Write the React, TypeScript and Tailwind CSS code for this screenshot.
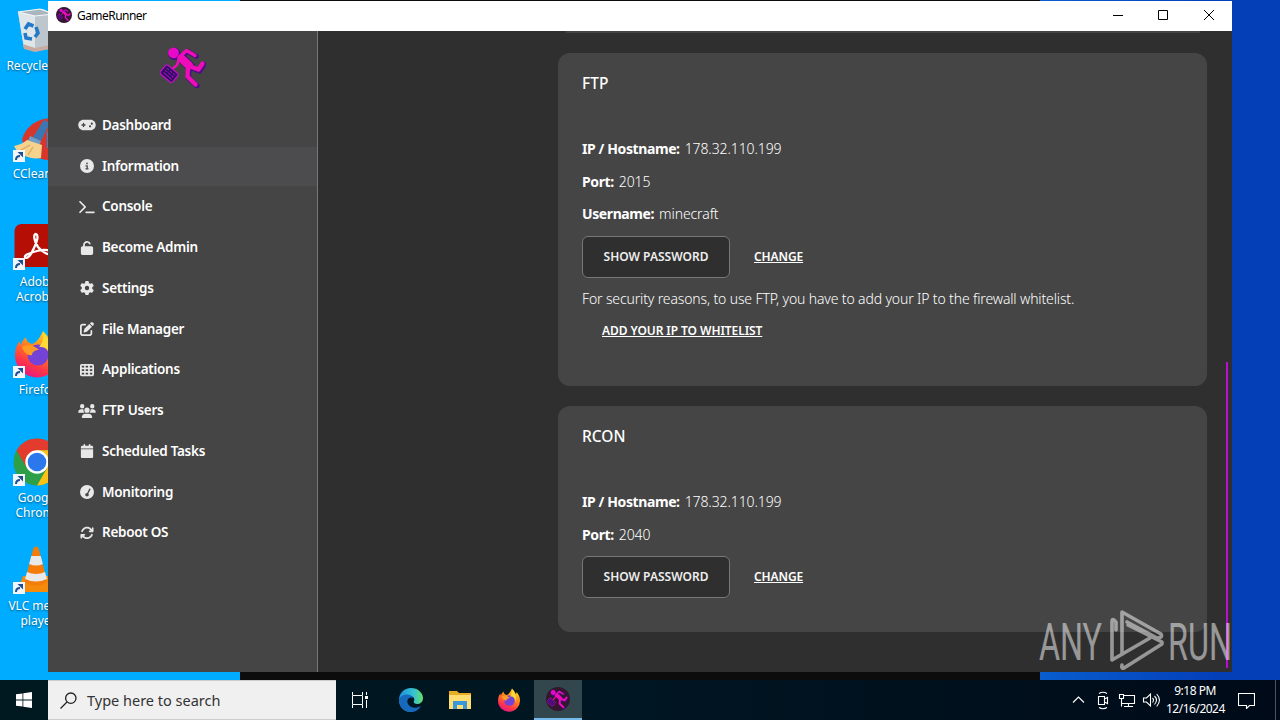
import type { ReactNode } from "react";
import type { IconType } from "react-icons";
import {
  FaArrowsRotate,
  FaCalendar,
  FaCircleInfo,
  FaGamepad,
  FaGaugeSimpleHigh,
  FaGear,
  FaPenToSquare,
  FaTableCells,
  FaTerminal,
  FaUnlock,
  FaUsers,
} from "react-icons/fa6";

type NavItem = { label: string; icon: IconType };

const navItems: NavItem[] = [
  { label: "Dashboard", icon: FaGamepad },
  { label: "Information", icon: FaCircleInfo },
  { label: "Console", icon: FaTerminal },
  { label: "Become Admin", icon: FaUnlock },
  { label: "Settings", icon: FaGear },
  { label: "File Manager", icon: FaPenToSquare },
  { label: "Applications", icon: FaTableCells },
  { label: "FTP Users", icon: FaUsers },
  { label: "Scheduled Tasks", icon: FaCalendar },
  { label: "Monitoring", icon: FaGaugeSimpleHigh },
  { label: "Reboot OS", icon: FaArrowsRotate },
];

function Runner({ className }: { className?: string }) {
  return (
    <svg viewBox="0 0 46 42" className={className} fill="none" strokeLinecap="round" strokeLinejoin="round">
      <g stroke="#4b0f86" transform="translate(0.9 0.9)">
        <circle cx="13.5" cy="7" r="5.8" fill="#4b0f86" />
        <path d="M19 11.5 26.5 4.5 35.5 9.5" strokeWidth="5" />
        <path d="M22 12.5 29.5 20" strokeWidth="9.5" />
        <path d="M29 20 38.5 24 43 17.5M28 21 27.5 31 36 39" strokeWidth="5.4" />
      </g>
      <g stroke="#f00cb8">
        <circle cx="13.5" cy="6.8" r="5.4" fill="#e808c8" stroke="none" />
        <path d="M19 11.5 26.5 4.5 35 9.5" strokeWidth="3.2" />
        <path d="M21.5 12.5 29 19.5" strokeWidth="8" />
        <path d="M29 20 38.5 23.5 42.5 17.5M28 21 27.5 30.5 35.5 38.5" strokeWidth="4.3" />
        <path d="M19 13 17 19 13.5 22" strokeWidth="2.4" />
      </g>
      <g transform="rotate(40 9.3 27.5)">
        <rect x="1.3" y="22" width="16" height="11.5" rx="2" fill="#320c62" stroke="#c010c8" strokeWidth="1.3" />
        <path d="M4.5 25h2M8.5 25h2M12.5 25h2M4.5 27.7h2M8.5 27.7h2M12.5 27.7h2M4.5 30.5h10" stroke="#a010c0" strokeWidth="1" />
      </g>
    </svg>
  );
}

function RunnerBadge({ className }: { className?: string }) {
  return (
    <span className={`flex items-center justify-center rounded-full bg-[#351631] ${className}`}>
      <Runner className="h-[84%] w-[88%]" />
    </span>
  );
}

function FirefoxLogo({ className }: { className?: string }) {
  return (
    <svg viewBox="0 0 48 48" className={className}>
      <defs>
        <linearGradient id="fox" x1="0.8" y1="0" x2="0.3" y2="1">
          <stop offset="0" stopColor="#ffe226" />
          <stop offset="0.4" stopColor="#ff8a1c" />
          <stop offset="0.75" stopColor="#ff3647" />
          <stop offset="1" stopColor="#e31587" />
        </linearGradient>
      </defs>
      <path
        d="M30 1c4 4 6 7 7 11 2-1 2-3 2-4 4 4 7 10 7 17A22 22 0 0 1 2 26c0-7 2-12 5-15 0 2 0 3 1 4 1-4 3-6 5-8 0 4 3 6 6 7 4-1 8-6 11-13z"
        fill="url(#fox)"
      />
      <circle cx="25" cy="25" r="10.5" fill="#7542d8" />
      <path d="M9 17c6-3 12-2 17 3-4 0-7 2-7 5-4 1-8-2-10-8z" fill="#ff9a22" />
      <path d="M30 3c1 8-2 12-4 14 8-1 11 5 10 11 4-7 3-17-6-25z" fill="#ffd83a" />
    </svg>
  );
}

function RecycleBin() {
  return (
    <svg viewBox="0 0 48 48" className="h-12 w-12">
      <path d="M5 6 30 3l10 5-4 34-13 3-12-3z" fill="#cfd8de" />
      <path d="M5 6 22 9v36l-11-3z" fill="#dfe6ea" />
      <path d="M22 9 41 8l-4 34-15 3z" fill="#bcc6cc" />
      <path d="M5 6 27 3l14 5-19 2z" fill="#aab6be" stroke="#f3f7f9" strokeWidth="1.2" />
      <path d="M10 38l12 4 15-3v4l-15 3-11-3z" fill="#c7aaa0" />
      <g fill="none" stroke="#2379c8" strokeWidth="3.6">
        <path d="m12 23 3.500-5 5 2M23 21l2 6-3 4M19 33l-6-1-1-5" />
      </g>
    </svg>
  );
}

function CCleaner() {
  return (
    <svg viewBox="0 0 48 48" className="h-12 w-12">
      <path d="M48 5C30 1 12 10 9 27L22 43Q36 48 48 46V34H34V18q6-4 14-3z" fill="#d7372b" />
      <path d="M34 18q6-4 14-3v19H34z" fill="#1f8fdc" />
      <path d="M31 6 20 23l8 4 9-18z" fill="#3978b4" />
      <path d="M17 22l11 5-2 5-11-5z" fill="#6b9fc9" />
      <path d="M14 26c-3 3-8 5-13 6 3 8 16 14 27 12l1-13z" fill="#f5d28d" />
      <path d="M8 36l9-5M15 41l5-8" stroke="#d9a860" strokeWidth="1.2" />
    </svg>
  );
}

function Acrobat() {
  return (
    <svg viewBox="0 0 48 48" className="h-12 w-12">
      <rect x="1.500" y="2" width="44" height="43" rx="7" fill="#b50f05" />
      <path
        d="M12 35c2 3 6-2 9-9 3-6 5-13 2-14-3 0-2 7 2 13 4 5 11 9 13 6 1-3-6-4-14-2-7 2-13 4-12 6z"
        fill="none"
        stroke="#fff"
        strokeWidth="2.3"
      />
    </svg>
  );
}

function Chrome() {
  return (
    <svg viewBox="0 0 48 48" className="h-12 w-12">
      <circle cx="24" cy="24" r="23.500" fill="#2c9f48" />
      <path d="M24 24 3.600 12.300A23.500 23.500 0 0 1 44.400 12.300L24 12.300z" fill="#e33b2e" />
      <path d="M24 12.300H44.400A23.500 23.500 0 0 1 24 47.500L34.100 29.900z" fill="#fbc116" />
      <path d="M3.600 12.300 13.900 29.900 24 24V12.300z" fill="#e33b2e" />
      <circle cx="24" cy="24" r="11.700" fill="#fff" />
      <circle cx="24" cy="24" r="9.300" fill="#2a78ec" />
    </svg>
  );
}

function Vlc() {
  return (
    <svg viewBox="0 0 48 48" className="h-12 w-12">
      <path d="M10 30h26l6 13q0 3-3 3H8q-3 0-3-3z" fill="#f58a0b" />
      <path d="M20.500 2q2.500-3 5 0l9 34q-11.500 7-23 0z" fill="#f47d0a" />
      <path d="m18.300 10h9.400l2.200 8q-6.500 3-13.800 0zM14 26q9 4 18 0l2 7q-11 5-22 0z" fill="#e9e9e9" />
    </svg>
  );
}

function Shortcut() {
  return (
    <svg viewBox="0 0 12 12" className="absolute bottom-0 left-0 h-3 w-3">
      <path d="M0 0h12v12H0z" fill="#f2f6fa" />
      <path d="M3 10c0-3 1-4 4-4" fill="none" stroke="#1d4f91" strokeWidth="2" />
      <path d="M4.500 2H10v5.500z" fill="#1d4f91" />
    </svg>
  );
}

type DesktopIcon = { lines: string[]; picture: ReactNode; shortcut: boolean };

const desktopIcons: DesktopIcon[] = [
  { lines: ["Recycle Bin"], picture: <RecycleBin />, shortcut: false },
  { lines: ["CCleaner"], picture: <CCleaner />, shortcut: true },
  { lines: ["Adobe", "Acrobat"], picture: <Acrobat />, shortcut: true },
  { lines: ["Firefox"], picture: <FirefoxLogo className="h-12 w-12" />, shortcut: true },
  { lines: ["Google", "Chrome"], picture: <Chrome />, shortcut: true },
  { lines: ["VLC media", "player"], picture: <Vlc />, shortcut: true },
];

function Desktop() {
  return (
    <div className="flex w-[74px] flex-col pt-1.5">
      {desktopIcons.map((item) => (
        <div key={item.lines[0]} className="flex h-[108px] flex-col items-center">
          <div className="relative h-12 w-12">
            {item.picture}
            {item.shortcut && <Shortcut />}
          </div>
          <div className="mt-1 ml-0.5 text-center text-[12px] leading-[15px] text-white [text-shadow:0_1px_2px_rgba(0,0,0,0.5)]">
            {item.lines.map((line) => (
              <div key={line} className="whitespace-nowrap">
                {line}
              </div>
            ))}
          </div>
        </div>
      ))}
    </div>
  );
}

function TitleBar() {
  return (
    <div className="flex h-[30px] shrink-0 items-center bg-white pl-2 text-black">
      <RunnerBadge className="-mt-0.5 h-4 w-4" />
      <span className="ml-[5px] text-[12px] tracking-[-0.55px]">GameRunner</span>
      <svg viewBox="0 0 138 30" className="ml-auto h-[30px] w-[138px]" fill="none" stroke="#000">
        <path d="M19 14.500h10M64.500 9.500h9v9h-9zM110 9l10 10M120 9l-10 10" />
      </svg>
    </div>
  );
}

function Sidebar() {
  return (
    <aside className="flex w-[270px] shrink-0 flex-col border-r border-[#777] bg-[#454545]">
      <div className="flex h-[75px] justify-center pt-[15px]">
        <Runner className="h-[42px] w-[46px]" />
      </div>
      <nav className="flex flex-col gap-0.5">
        {navItems.map(({ label, icon: Icon }) => (
          <a
            key={label}
            className={`flex h-[38.75px] items-center pl-[30px] text-[13.5px] leading-[19px] font-semibold tracking-[-0.28px] text-white ${
              label === "Information" ? "bg-[#4c4c4e]" : ""
            }`}
          >
            <Icon className="mr-1.5 h-3.5 w-[18px] text-[#e8e8e8]" />
            {label}
          </a>
        ))}
      </nav>
    </aside>
  );
}

function Field({ name, value }: { name: string; value: string }) {
  return (
    <p className="h-[32.6px] whitespace-nowrap text-[14px] leading-[22px]">
      <strong className="font-bold tracking-[-0.4px]">{name}:</strong>
      <span className="ml-[5px] font-light tracking-[-0.1px]">{value}</span>
    </p>
  );
}

function PasswordActions() {
  return (
    <div className="flex items-center text-[12px] font-semibold">
      <button className="h-[42px] w-[148px] rounded-md border border-[#777] bg-[#2f2f2f] text-[#eee]">
        SHOW PASSWORD
      </button>
      <a className="ml-6 tracking-[-0.1px] underline">CHANGE</a>
    </div>
  );
}

function Main() {
  return (
    <main className="relative flex flex-1 flex-col bg-[#2f2f2f] pl-[240px] text-white">
      <div className="mr-8 ml-2 h-0.5 bg-[#454545]" />
      <section className="mt-5 mr-[25px] h-[333px] rounded-xl bg-[#454545] px-6 pt-[19px]">
        <h2 className="text-[15.5px] leading-[22px] font-medium">FTP</h2>
        <div className="mt-11">
          <Field name="IP / Hostname" value="178.32.110.199" />
          <Field name="Port" value="2015" />
          <Field name="Username" value="minecraft" />
        </div>
        <PasswordActions />
        <p className="mt-[11px] text-[14px] leading-[20px] font-light tracking-[-0.14px]">
          For security reasons, to use FTP, you have to add your IP to the firewall whitelist.
        </p>
        <a className="mt-[13px] ml-5 block text-[12px] leading-[18px] font-semibold tracking-[-0.07px] underline">
          ADD YOUR IP TO WHITELIST
        </a>
      </section>
      <section className="mt-5 mr-[25px] h-[226px] rounded-xl bg-[#454545] px-6 pt-[19px]">
        <h2 className="text-[15.5px] leading-[22px] font-medium">RCON</h2>
        <div className="mt-11">
          <Field name="IP / Hostname" value="178.32.110.199" />
          <Field name="Port" value="2040" />
        </div>
        <PasswordActions />
      </section>
      <div className="absolute top-[331px] right-[4px] h-[306px] w-0.5 bg-[#b80fd0]" />
    </main>
  );
}

function Watermark() {
  return (
    <svg viewBox="0 0 200 64" className="absolute top-[608px] left-[1038px] h-16 w-[200px] overflow-visible opacity-50">
      <g fill="#fff" fontFamily="Roboto, sans-serif" fontSize="52">
        <text x="1" y="51.500" textLength="63" lengthAdjust="spacingAndGlyphs">
          ANY
        </text>
        <text x="130" y="51.500" textLength="64" lengthAdjust="spacingAndGlyphs">
          RUN
        </text>
      </g>
      <g fill="none" stroke="#fff" strokeWidth="3.6" strokeLinejoin="round" strokeLinecap="round">
        <path d="M78 22v-8q-4-5-4 0v38l38-22" />
        <path d="M84 46V4l39 22q2 4-4 4L89 14" />
        <path d="M90 17l34 17v2L86 60q-3 1-2-3" />
      </g>
    </svg>
  );
}

function Taskbar() {
  return (
    <footer className="flex h-10 shrink-0 items-stretch bg-gradient-to-r from-[#001820] via-[#001622] to-[#000a18] text-white">
      <div className="flex w-12 items-center justify-center">
        <svg viewBox="0 0 16 16" className="h-4 w-4" fill="#fff">
          <path d="M0 2.300 6.500 1.400v6.200H0zM7.300 1.300 16 0v7.600H7.300zM0 8.400h6.500v6.200L0 13.700zM7.300 8.400H16V16l-8.700-1.300z" />
        </svg>
      </div>
      <div className="flex w-72 items-center border-y border-[#ccc] bg-[#f0f0f0] pt-px pl-3 text-[14.5px] text-[#333]">
        <svg viewBox="0 0 17 17" className="mr-2.5 h-[17px] w-[17px]" fill="none" stroke="#222" strokeWidth="1.3">
          <circle cx="10.800" cy="6.200" r="5.200" />
          <path d="M7 10 .500 16.500" />
        </svg>
        <span>Type here to search</span>
      </div>
      <div className="flex w-12 items-center justify-center">
        <svg viewBox="0 0 18 18" className="h-[18px] w-[18px]" fill="none" stroke="#fff">
          <path d="M1.500 1v3.500h10V1M1.500 17v-3.500h10V17M1.500 5v8M11.500 5v8M15.500 1v3M15.500 9v8" />
          <path d="M14 5h3v3h-3z" fill="#fff" stroke="none" />
        </svg>
      </div>
      <div className="ml-[3px] flex w-12 items-center justify-center">
        <svg viewBox="0 0 24 24" className="h-6 w-6">
          <defs>
            <linearGradient id="edge" x1="0" y1="0.300" x2="1" y2="0.300">
              <stop offset="0" stopColor="#1d8fd8" />
              <stop offset="0.6" stopColor="#35c1d4" />
              <stop offset="1" stopColor="#66df66" />
            </linearGradient>
          </defs>
          <path
            d="M12 0C19 0 24 5 24 10c0 4-3 6-6 6-2 0-4-1-3-3 1-3-1-5-4-5-5 0-7 5-5 10 2 3 5 5 9 5-9 3-15-4-15-11C0 5 5 0 12 0z"
            fill="url(#edge)"
          />
          <path d="M0 12c1-6 12-8 14-2-4-2-7 2-5 6 2 4 8 5 13 2-3 5-7 6-10 6C5 24 0 19 0 12z" fill="#1769bd" />
        </svg>
      </div>
      <div className="ml-px flex w-12 items-center justify-center">
        <svg viewBox="0 0 22 18" className="h-[18px] w-[22px]">
          <path d="M0 0h8l2 2h12v16H0z" fill="#e9ac25" />
          <path d="M0 4h22v14H0z" fill="#ffdd70" />
          <path d="M4 10h14v8h-4v-4H8v4H4z" fill="#3998db" />
        </svg>
      </div>
      <div className="ml-px flex w-12 items-center justify-center">
        <FirefoxLogo className="h-6 w-6" />
      </div>
      <div className="ml-px flex w-12 items-center justify-center border-b-2 border-[#76b9ed] bg-[#32464e]">
        <RunnerBadge className="h-6 w-6" />
      </div>
      <div className="ml-auto flex items-center">
        <svg viewBox="0 0 90 20" className="h-5 w-[90px]" fill="none" stroke="#fff" strokeWidth="1.100">
          <path d="M1 12.500 6.500 7l5.500 5.500" />
          <path d="M26.500 6.500h6v8h-6zM32.500 9l3-1.500v6l-3-1.500M27 3.500q4-2.500 8 0M27 17.500q4 2.500 8 0" />
          <path d="M51.500 5.500h11v8H50M56.500 13.500v3M52 16.500h9M47.500 4.500h4v4h-4zM49.500 8.500v8" />
          <path d="M71.500 8h3l4-4v12l-4-4h-3zM80.500 8q2 2 0 4.500M82.500 6q4 4 0 8.500M84.700 4q5.500 6 0 12.500" />
        </svg>
        <div className="ml-1 w-[58px] text-center text-[12px] leading-[18px] tracking-[-0.5px] whitespace-nowrap">
          <div>9:18 PM</div>
          <div>12/16/2024</div>
        </div>
        <svg viewBox="0 0 17 17" className="mr-5 ml-3.5 h-[17px] w-[17px]" fill="none" stroke="#fff" strokeWidth="1.100">
          <path d="M.500 1.500h16v12h-5l-3 3v-3h-8z" />
        </svg>
        <div className="mr-1 h-10 w-px bg-[#465566]" />
      </div>
    </footer>
  );
}

export default function App() {
  return (
    <div className="relative flex h-[720px] w-[1280px] flex-col overflow-hidden bg-gradient-to-r from-[#00acff] from-20% via-[#0a60d0] via-80% to-[#053fb8] to-95% font-['Noto_Sans','Open_Sans',sans-serif]">
      <div className="flex-1 overflow-hidden">
        <Desktop />
      </div>
      <div className="absolute top-0 left-60 h-[680px] w-[800px] bg-[#0c0c0c]" />
      <div className="absolute top-px left-12 flex h-[671px] w-[1184px] flex-col overflow-hidden">
        <TitleBar />
        <div className="flex flex-1">
          <Sidebar />
          <Main />
        </div>
      </div>
      <Watermark />
      <Taskbar />
    </div>
  );
}
